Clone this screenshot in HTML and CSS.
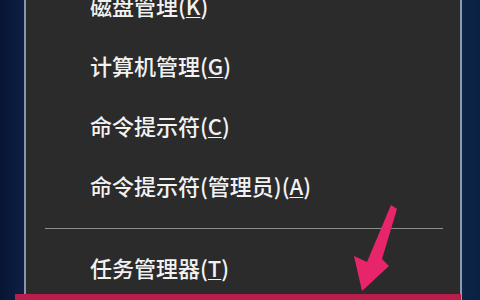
FILE: index.html
```html
<!DOCTYPE html>
<html lang="zh-CN">
<head>
<meta charset="utf-8">
<link rel="stylesheet" href="styles.css">
</head>
<body>
<div class="desk desk-left"></div>
<div class="menu">
  <ul class="items">
    <li class="item">磁盘管理(<u>K</u>)</li>
    <li class="item">计算机管理(<u>G</u>)</li>
    <li class="item">命令提示符(<u>C</u>)</li>
    <li class="item">命令提示符(管理员)(<u>A</u>)</li>
    <li class="sep"></li>
    <li class="item">任务管理器(<u>T</u>)</li>
  </ul>
</div>
<div class="desk desk-right"></div>
<div class="highlight"></div>
<svg class="arrow" width="60" height="100" viewBox="340 200 60 100">
  <polygon points="391,205 397,209 382,259 389,266 362,291 354,256 367,262" fill="#e8256a"/>
</svg>
</body>
</html>
```

FILE: styles.css
```css
html, body {
  margin: 0;
  padding: 0;
}
body {
  width: 480px;
  height: 300px;
  overflow: hidden;
  display: flex;
  position: relative;
  background: #0b1d3d;
  font-family: "Noto Sans CJK SC", "Noto Sans", sans-serif;
}
.desk {
  height: 300px;
}
.desk-left {
  width: 24px;
  background: linear-gradient(90deg, #081634, #0d1f44);
}
.desk-right {
  flex: 1;
  background: linear-gradient(90deg, #0c2548, #0a2141);
}
.menu {
  width: 434px;
  height: 300px;
  background: #2b2b2b;
  border-left: 2px solid #8797ae;
  border-right: 2px solid #8a9bb3;
  overflow: hidden;
}
.items {
  list-style: none;
  margin: -25px 0 0 0;
  padding: 0;
}
.item {
  height: 60px;
  line-height: 60px;
  padding-left: 64px;
  font-size: 22px;
  font-weight: 500;
  color: #f2f2f2;
  white-space: nowrap;
}
.item u {
  text-decoration-thickness: 1px;
  text-underline-offset: 2px;
}
.sep {
  height: 1px;
  background: #8c8c8c;
  margin: 13px 17px 8px 19px;
}
.highlight {
  position: absolute;
  left: 15px;
  top: 294px;
  width: 446px;
  height: 6px;
  background: #b81d4b;
}
.arrow {
  position: absolute;
  left: 340px;
  top: 200px;
}
```
